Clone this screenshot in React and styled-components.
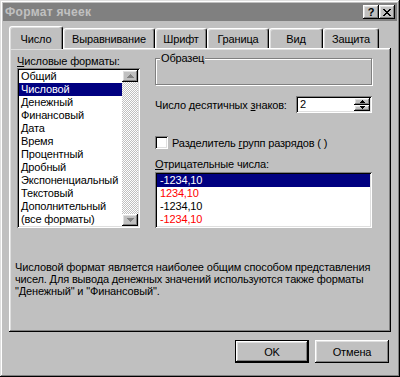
import React from 'react';
import styled, { createGlobalStyle } from 'styled-components';

const GlobalStyle = createGlobalStyle`
  html, body { margin: 0; padding: 0; background: #c0c0c0; }
  body {
    font-family: "Liberation Sans", Arial, sans-serif;
    font-size: 11px;
    letter-spacing: -0.15px;
    color: #000;
  }
  * { box-sizing: border-box; }
`;

const raised = `box-shadow: inset -1px -1px #000, inset 1px 1px #dfdfdf, inset -2px -2px #808080, inset 2px 2px #fff;`;
const raisedBtn = `box-shadow: inset -1px -1px #000, inset 1px 1px #fff, inset -2px -2px #808080, inset 2px 2px #dfdfdf;`;
const sunken = `box-shadow: inset 1px 1px #808080, inset -1px -1px #fff, inset 2px 2px #000, inset -2px -2px #dfdfdf;`;

const Window = styled.div`
  width: 400px;
  height: 377px;
  padding: 3px;
  background: #c0c0c0;
  display: flex;
  flex-direction: column;
  ${raised}
`;

const TitleBar = styled.div`
  height: 18px;
  flex: none;
  background: #808080;
  display: flex;
  align-items: center;
  justify-content: space-between;
  padding: 0 2px;
`;

const Title = styled.span`
  color: #c0c0c0;
  font-weight: bold;
  font-size: 12px;
  letter-spacing: 0.3px;
  white-space: nowrap;
`;

const TitleButtons = styled.div`
  display: flex;
`;

const TitleButton = styled.div`
  width: 16px;
  height: 14px;
  background: #c0c0c0;
  display: flex;
  align-items: center;
  justify-content: center;
  font-weight: bold;
  font-size: 11px;
  line-height: 1;
  ${raisedBtn}
`;

const TabStrip = styled.div`
  display: flex;
  align-items: flex-end;
  height: 22px;
  margin: 5px 6px 0;
  position: relative;
  z-index: 1;
  flex: none;
`;

const Tab = styled.div`
  width: ${p => p.$w}px;
  height: ${p => (p.$active ? 23 : 20)}px;
  margin-bottom: ${p => (p.$active ? -1 : 0)}px;
  background: #c0c0c0;
  border-top: 1px solid #fff;
  border-left: 1px solid #fff;
  border-right: 1px solid #000;
  border-radius: 3px 3px 0 0;
  box-shadow: inset -1px 0 #808080, inset 1px 1px #dfdfdf;
  text-align: center;
  padding-top: ${p => (p.$active ? 6 : 4)}px;
  line-height: 13px;
  white-space: nowrap;
`;

const Panel = styled.div`
  margin: 0 6px;
  height: 284px;
  flex: none;
  background: #c0c0c0;
  padding: 7px 6px 0;
  box-shadow: inset -1px -1px #000, inset 1px 1px #fff, inset -2px -2px #808080, inset 2px 2px #dfdfdf;
`;

const Columns = styled.div`
  display: flex;
  gap: 15px;
  padding-left: 2px;
`;

const Column = styled.div`
  width: ${p => p.$w}px;
  display: flex;
  flex-direction: column;
`;

const Label = styled.div`
  height: 13px;
  line-height: 13px;
  white-space: nowrap;
  margin-top: ${p => p.$mt || 0}px;
`;

const Key = styled.span`
  text-decoration: underline;
  text-underline-offset: 1px;
`;

const ListBox = styled.div`
  height: ${p => p.$h}px;
  margin-top: ${p => p.$mt || 0}px;
  background: #fff;
  padding: 2px;
  display: flex;
  ${sunken}
`;

const Items = styled.div`
  flex: 1;
  display: flex;
  flex-direction: column;
  overflow: hidden;
`;

const Item = styled.div`
  height: 13px;
  flex: none;
  line-height: 13px;
  padding-left: ${p => p.$pad}px;
  white-space: nowrap;
  background: ${p => (p.$sel ? '#000080' : 'transparent')};
  color: ${p => (p.$sel ? '#fff' : p.$red ? '#ff0000' : '#000')};
`;

const ScrollBar = styled.div`
  width: 16px;
  flex: none;
  display: flex;
  flex-direction: column;
  justify-content: space-between;
  background-color: #fff;
  background-image: repeating-conic-gradient(#c0c0c0 0 25%, #ffffff 0 50%);
  background-size: 2px 2px;
`;

const ArrowButton = styled.div`
  height: ${p => p.$h}px;
  flex: ${p => (p.$grow ? 1 : 'none')};
  background: #c0c0c0;
  display: flex;
  align-items: center;
  justify-content: center;
  ${raisedBtn}
`;

const Group = styled.div`
  position: relative;
  margin-top: 3px;
  height: 27px;
  border: 1px solid #808080;
  box-shadow: 1px 1px 0 #fff, inset 1px 1px 0 #fff;
`;

const Legend = styled.span`
  position: absolute;
  top: -7px;
  left: 4px;
  padding: 0 1px;
  background: #c0c0c0;
  line-height: 13px;
`;

const SpinRow = styled.div`
  display: flex;
  align-items: center;
  justify-content: space-between;
  height: 17px;
  margin-top: 11px;
`;

const SpinBox = styled.div`
  width: 76px;
  height: 17px;
  background: #fff;
  padding: 2px;
  display: flex;
  ${sunken}
`;

const SpinValue = styled.div`
  flex: 1;
  padding-left: 2px;
  line-height: 13px;
`;

const SpinButtons = styled.div`
  width: 16px;
  display: flex;
  flex-direction: column;
`;

const CheckRow = styled.div`
  display: flex;
  align-items: center;
  gap: 4px;
  height: 13px;
  margin-top: 23px;
  white-space: nowrap;
`;

const CheckBox = styled.div`
  width: 13px;
  height: 13px;
  flex: none;
  background: #fff;
  ${sunken}
`;

const Description = styled.p`
  margin: 33px 0 0;
  line-height: 12px;
  white-space: nowrap;
`;

const ButtonRow = styled.div`
  display: flex;
  justify-content: flex-end;
  gap: 6px;
  margin-top: 8px;
  padding-right: 8px;
`;

const Button = styled.button`
  width: 74px;
  height: 23px;
  border: none;
  padding: 0;
  background: #c0c0c0;
  font: inherit;
  letter-spacing: inherit;
  color: #000;
  ${p =>
    p.$default
      ? 'box-shadow: inset 0 0 0 1px #000, inset -2px -2px #000, inset 2px 2px #fff, inset -3px -3px #808080, inset 3px 3px #dfdfdf;'
      : raisedBtn}
`;

const Arrow = ({ up, color = '#000' }) => (
  <svg width="7" height="4" viewBox="0 0 7 4" style={{ display: 'block' }}>
    <path d={up ? 'M3 0h1v1h1v1h1v1h1v1H0V3h1V2h1V1h1z' : 'M0 0h7v1H6v1H5v1H4v1H3V3H2V2H1V1H0z'} fill={color} />
  </svg>
);

const SmallArrow = ({ up }) => (
  <svg width="5" height="3" viewBox="0 0 5 3" style={{ display: 'block' }}>
    <path d={up ? 'M2 0h1v1h1v1h1v1H0V2h1V1h1z' : 'M0 0h5v1H4v1H3v1H2V2H1V1H0z'} fill="#000" />
  </svg>
);

const CloseGlyph = () => (
  <svg width="8" height="7" viewBox="0 0 8 7" style={{ display: 'block' }}>
    <path d="M0 0h2v1h1v1h2V1h1V0h2v1H7v1H6v1H5v1h1v1h1v1h1v1H6V6H5V5H3v1H2v1H0V6h1V5h1V4h1V3H2V2H1V1H0z" fill="#000" />
  </svg>
);

const tabs = [
  { label: 'Число', w: 54, active: true },
  { label: 'Выравнивание', w: 92 },
  { label: 'Шрифт', w: 52 },
  { label: 'Граница', w: 62 },
  { label: 'Вид', w: 54 },
  { label: 'Защита', w: 56 },
];

const formats = [
  'Общий', 'Числовой', 'Денежный', 'Финансовый', 'Дата', 'Время', 'Процентный',
  'Дробный', 'Экспоненциальный', 'Текстовый', 'Дополнительный', '(все форматы)',
];

const negatives = [
  { v: '-1234,10', sel: true },
  { v: '1234,10', red: true },
  { v: '-1234,10' },
  { v: '-1234,10', red: true },
];

export default function App() {
  return (
    <>
      <GlobalStyle />
      <Window>
        <TitleBar>
          <Title>Формат ячеек</Title>
          <TitleButtons>
            <TitleButton>?</TitleButton>
            <TitleButton><CloseGlyph /></TitleButton>
          </TitleButtons>
        </TitleBar>

        <TabStrip>
          {tabs.map(t => (
            <Tab key={t.label} $w={t.w} $active={t.active}>{t.label}</Tab>
          ))}
        </TabStrip>

        <Panel>
          <Columns>
            <Column $w={123}>
              <Label><Key>Ч</Key>исловые форматы:</Label>
              <ListBox $h={160}>
                <Items>
                  {formats.map((f, i) => (
                    <Item key={f} $pad={2} $sel={i === 1}>{f}</Item>
                  ))}
                </Items>
                <ScrollBar>
                  <ArrowButton $h={12}><Arrow up color="#808080" /></ArrowButton>
                  <ArrowButton $h={12}><Arrow color="#808080" /></ArrowButton>
                </ScrollBar>
              </ListBox>
            </Column>

            <Column $w={217}>
              <Group>
                <Legend>Образец</Legend>
              </Group>

              <SpinRow>
                <span>Число десятичных <Key>з</Key>наков:</span>
                <SpinBox>
                  <SpinValue>2</SpinValue>
                  <SpinButtons>
                    <ArrowButton $grow><SmallArrow up /></ArrowButton>
                    <ArrowButton $grow><SmallArrow /></ArrowButton>
                  </SpinButtons>
                </SpinBox>
              </SpinRow>

              <CheckRow>
                <CheckBox />
                <span>Разделитель <Key>г</Key>рупп разрядов ( )</span>
              </CheckRow>

              <Label $mt={9}><Key>О</Key>трицательные числа:</Label>
              <ListBox $h={56} $mt={1}>
                <Items>
                  {negatives.map((n, i) => (
                    <Item key={i} $pad={3} $sel={n.sel} $red={n.red}>{n.v}</Item>
                  ))}
                </Items>
              </ListBox>
            </Column>
          </Columns>

          <Description>
            Числовой формат является наиболее общим способом представления<br />
            чисел. Для вывода денежных значений используются также форматы<br />
            "Денежный" и "Финансовый".
          </Description>
        </Panel>

        <ButtonRow>
          <Button $default>OK</Button>
          <Button>Отмена</Button>
        </ButtonRow>
      </Window>
    </>
  );
}
